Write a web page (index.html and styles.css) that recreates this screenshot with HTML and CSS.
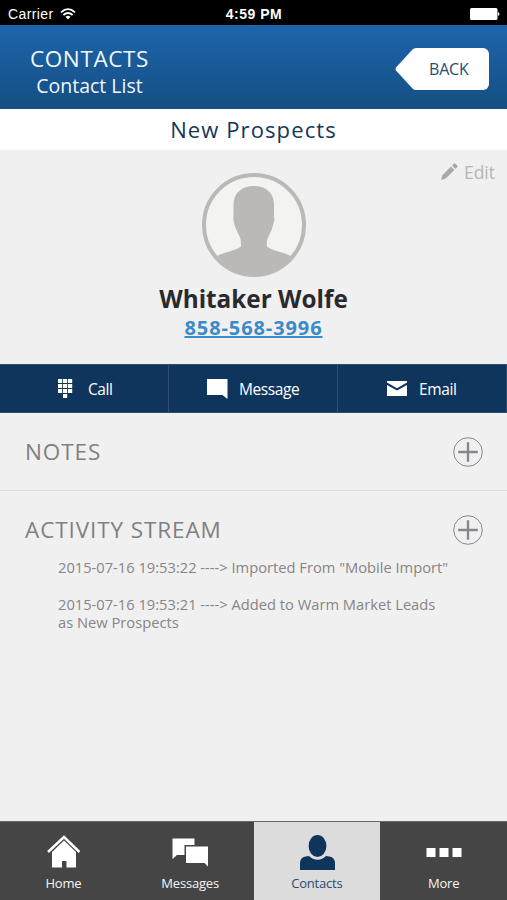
FILE: index.html
```html
<!DOCTYPE html>
<html lang="en">
<head>
  <meta charset="UTF-8">
  <meta name="viewport" content="width=device-width, initial-scale=1">
  <title>Contacts</title>
  <link rel="stylesheet" href="styles.css">
</head>
<body>

  <div class="status-bar">
    <div class="carrier">
      <span class="carrier-name">Carrier</span>
      <svg width="16" height="12" viewBox="0 0 16 12" fill="none" stroke="#fff" stroke-width="1.8">
        <path d="M1 4.3Q8 -2 15 4.3"/>
        <path d="M3.4 7Q8 3 12.6 7"/>
        <path d="M5.5 8.8Q8 6.8 10.5 8.8L8 11.6z" fill="#fff" stroke="none"/>
      </svg>
    </div>
    <span class="time">4:59 PM</span>
    <svg class="battery" width="30" height="12" viewBox="0 0 30 12" fill="#fff">
      <rect x="0" y="0" width="27.5" height="12" rx="1.5"/>
      <path d="M28 4q3 2 0 4z"/>
    </svg>
  </div>

  <header class="header">
    <div class="header-text">
      <h1>CONTACTS</h1>
      <p>Contact List</p>
    </div>
    <a class="back" href="#">
      <svg class="back-arrow" width="22" height="42" viewBox="0 0 22 42">
        <path d="M22 0H21Q19 0 17.500 1.500L1 19.500Q0 21 1 22.500L17.500 40.500Q19 42 21 42H22z" fill="#fff"/>
      </svg>
      <span class="back-label">BACK</span>
    </a>
  </header>

  <h2 class="list-name">New Prospects</h2>

  <section class="profile">
    <a class="edit" href="#">
      <svg width="17" height="17" viewBox="0 0 17 17" fill="#a9a9a9">
        <path d="M0 17L1.300 12.200L10 3.500L13.400 6.900L4.800 15.600z"/>
        <path d="M11 2.500L13 .5Q13.600 0 14.200 .5L16.400 2.700Q17 3.300 16.400 3.900L14.400 5.900z"/>
      </svg>
      <span>Edit</span>
    </a>
    <svg class="avatar" width="104" height="104" viewBox="0 0 104 104">
      <circle cx="52" cy="52" r="50" fill="#f3f3f2"/>
      <path d="M52 13C40 13 31.500 20 31.500 31.500V44Q31 46 32 50C33.500 56 36.500 61 38.500 65.500Q39 69 39 73.500C33 78 24 78.500 15 83Q30 102 52 102Q74 102 89 83C80 78.500 70 78 65 73.500Q64.500 69 65.500 65.500C68 61 70.500 56 71.500 50Q73 46 72 44V31.500C72 20 64 13 52 13z" fill="#bab9b7"/>
      <circle cx="52" cy="52" r="50" fill="none" stroke="#bab9b7" stroke-width="4"/>
    </svg>
    <h3>Whitaker Wolfe</h3>
    <a class="phone" href="tel:8585683996">858-568-3996</a>
  </section>

  <div class="actions">
    <a class="call" href="#">
      <svg width="15" height="20" viewBox="0 0 15 20" fill="#fff">
        <path d="M0 0h4.200v4H0zM5 0h4.200v4H5zM10 0h4.200v4H10zM0 5h4.200v4H0zM5 5h4.200v4H5zM10 5h4.200v4H10zM0 10h4.200v4H0zM5 10h4.200v4H5zM10 10h4.200v4H10zM5 15h4.200v4H5z"/>
      </svg>
      <span>Call</span>
    </a>
    <a class="message" href="#">
      <svg width="21" height="20" viewBox="0 0 21 20" fill="#fff">
        <path d="M0 0h20.500v20l-5-4H0z"/>
      </svg>
      <span>Message</span>
    </a>
    <a class="email" href="#">
      <svg width="20" height="15" viewBox="0 0 20 15" fill="#fff">
        <path d="M0 0h20v1.500L10 7.200L0 1.500z"/>
        <path d="M0 4l10 5.500L20 4v11H0z"/>
      </svg>
      <span>Email</span>
    </a>
  </div>

  <section class="notes">
    <h4>NOTES</h4>
    <a class="add" href="#">
      <svg width="30" height="30" viewBox="0 0 30 30" fill="none" stroke="#858890">
        <circle cx="15" cy="15" r="14.300"/>
        <path d="M15 5.200v19.600M5.200 15h19.600" stroke-width="2.400"/>
      </svg>
    </a>
  </section>

  <section class="activity">
    <div class="activity-title">
      <h4>ACTIVITY STREAM</h4>
      <a class="add" href="#">
        <svg width="30" height="30" viewBox="0 0 30 30" fill="none" stroke="#858890">
          <circle cx="15" cy="15" r="14.300"/>
          <path d="M15 5.200v19.600M5.200 15h19.600" stroke-width="2.400"/>
        </svg>
      </a>
    </div>
    <ul>
      <li>2015-07-16 19:53:22 ----&gt; Imported From "Mobile Import"</li>
      <li>2015-07-16 19:53:21 ----&gt; Added to Warm Market Leads<br>as New Prospects</li>
    </ul>
  </section>

  <nav class="tabs">
    <a href="#">
      <svg width="34" height="34" viewBox="0 0 34 34">
        <path d="M2 17L18 2L33.500 17" fill="none" stroke="#fff" stroke-width="2.500"/>
        <path d="M18 5.500L30 17V32.500H20.500V26H16V32.500H6V17z" fill="#fff"/>
      </svg>
      <span>Home</span>
    </a>
    <a href="#">
      <svg width="36" height="34" viewBox="0 0 36 34" fill="#fff">
        <path d="M.5 3.500h22v6.500H12.500V20H5l-4.500 4z"/>
        <path d="M14 11.500h22v20L32.500 28H14z"/>
      </svg>
      <span>Messages</span>
    </a>
    <a class="active" href="#">
      <svg width="36" height="36" viewBox="0 0 36 36" fill="#0f355c">
        <ellipse cx="18.500" cy="11" rx="8.900" ry="11"/>
        <path d="M1 35V28.500Q1 22.500 6.500 21.500L10 21Q13.500 24.700 18.500 24.700T27 21L30.500 21.500Q36 22.500 36 28.500V35z"/>
      </svg>
      <span>Contacts</span>
    </a>
    <a href="#">
      <svg width="36" height="34" viewBox="0 0 36 34" fill="#fff">
        <path d="M.5 13h9v9h-9zM13.500 13h9v9h-9zM26.500 13h9v9h-9z"/>
      </svg>
      <span>More</span>
    </a>
  </nav>

</body>
</html>
```
FILE: styles.css
```css
* {
  box-sizing: border-box;
  margin: 0;
  padding: 0;
}

body {
  display: flex;
  flex-direction: column;
  height: 900px;
  background-color: #f0f0f0;
  font-family: "Open Sans", "Noto Sans", sans-serif;
}

a {
  color: inherit;
  text-decoration: none;
}

svg {
  display: block;
  flex-shrink: 0;
}

.status-bar {
  display: grid;
  grid-template-columns: 1fr auto 1fr;
  align-items: center;
  height: 25px;
  padding: 2px 7px 0 8px;
  background-color: #000;
  color: #fff;
  font-family: "Liberation Sans", Arial, sans-serif;
  font-size: 14px;
}

.carrier {
  display: flex;
  align-items: center;
  gap: 6px;
}

.carrier-name {
  letter-spacing: 0.4px;
}

.time {
  font-weight: bold;
  letter-spacing: 0.5px;
}

.battery {
  justify-self: end;
}

.header {
  display: flex;
  justify-content: space-between;
  height: 84px;
  padding: 19px 18px 0 30px;
  background: linear-gradient(#1d65ad, #154e82);
  color: #f1f7fc;
}

.header-text {
  text-align: center;
}

.header h1 {
  font-size: 22.5px;
  font-weight: normal;
  line-height: 30px;
  letter-spacing: 0.6px;
}

.header p {
  font-size: 19.5px;
  line-height: 23px;
}

.back {
  display: flex;
  height: 42px;
  margin-top: 4px;
}

.back-label {
  width: 72px;
  padding-left: 12px;
  background-color: #fff;
  border-radius: 0 6px 6px 0;
  color: #284c70;
  font-size: 16px;
  line-height: 42px;
  letter-spacing: -0.2px;
}

.list-name {
  height: 41px;
  background-color: #fff;
  color: #12375c;
  font-size: 22px;
  font-weight: 500;
  line-height: 41px;
  letter-spacing: 1.1px;
  text-align: center;
}

.profile {
  display: flex;
  flex-direction: column;
  align-items: center;
  height: 214px;
}

.edit {
  display: flex;
  align-items: center;
  align-self: flex-end;
  gap: 6px;
  height: 23px;
  margin-top: 10px;
  padding-right: 12px;
  color: #b5b5b5;
  font-size: 17.5px;
}

.avatar {
  margin-top: -10px;
}

.profile h3 {
  margin-top: 5px;
  color: #2a2a2c;
  font-size: 24.3px;
  line-height: 34px;
}

.phone {
  color: #3b8bc8;
  font-size: 20px;
  font-weight: bold;
  line-height: 24px;
  letter-spacing: 0.9px;
  text-decoration: underline;
}

.actions {
  display: grid;
  grid-template-columns: repeat(3, 1fr);
  height: 49px;
  background-color: #0f355c;
  border-top: 1px solid #2b4d70;
  border-bottom: 1px solid #2b4d70;
  color: #fff;
  font-size: 15.5px;
  letter-spacing: -0.4px;
}

.actions a {
  display: flex;
  align-items: center;
  border-right: 1px solid #2f4f71;
}

.actions .call {
  gap: 15px;
  padding-left: 58px;
}

.actions .message {
  gap: 11px;
  padding-left: 38px;
}

.actions .email {
  gap: 12px;
  padding-left: 49px;
}

.notes,
.activity-title {
  display: flex;
  align-items: center;
  justify-content: space-between;
  padding: 0 24px 0 25px;
}

.notes {
  height: 78px;
  border-bottom: 1px solid #dcdcdc;
}

h4 {
  margin-top: -1px;
  color: #808080;
  font-size: 22.5px;
  font-weight: 500;
  letter-spacing: 0.9px;
}

.activity {
  flex: 1;
}

.activity-title {
  height: 78px;
}

.activity ul {
  margin-top: -11px;
  padding-left: 58px;
  list-style: none;
}

.activity li {
  margin-bottom: 19px;
  color: #868686;
  font-size: 14.7px;
  line-height: 18px;
}

.tabs {
  display: grid;
  grid-template-columns: repeat(4, 1fr);
  height: 79px;
  background-color: #454545;
  border-top: 1px solid #666;
  color: #f5f5f5;
  font-size: 13px;
  letter-spacing: -0.2px;
}

.tabs a {
  display: flex;
  flex-direction: column;
  align-items: center;
  justify-content: space-between;
  padding: 13px 0 8px;
  line-height: 18px;
}

.tabs .active {
  background-color: #dcdcdc;
  color: #284c70;
}
```
